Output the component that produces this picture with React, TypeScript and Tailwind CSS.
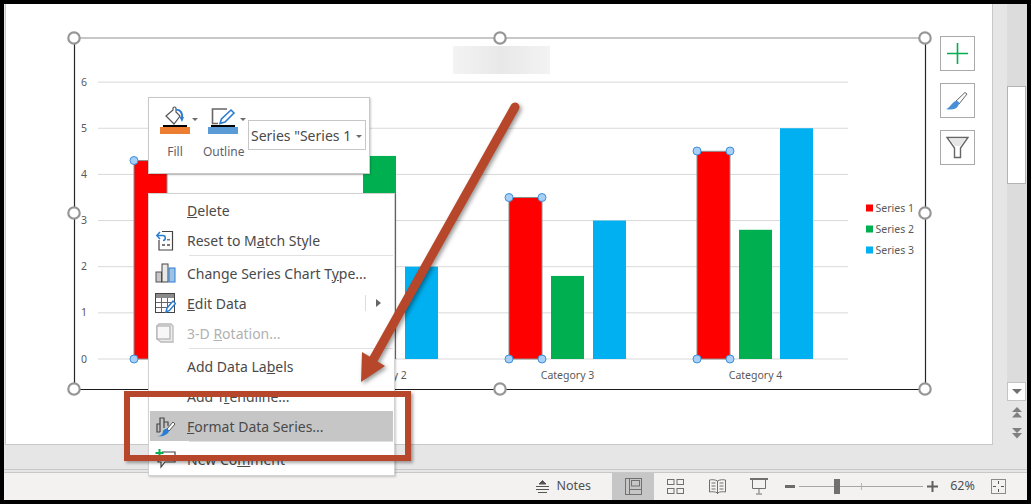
import type { ReactNode } from "react";

const rows = [6, 5, 4, 3, 2, 1, 0];
const yFor = (v: number) => 359 - v * 46.15;

const bars = [
  { x: 134, v: 4.3, fill: "#ff0000", selected: true },
  { x: 176, v: 2.4, fill: "#00b050" },
  { x: 217, v: 2, fill: "#00b0f0" },
  { x: 322, v: 2.5, fill: "#ff0000", selected: true },
  { x: 363, v: 4.4, fill: "#00b050" },
  { x: 405, v: 2, fill: "#00b0f0" },
  { x: 509, v: 3.5, fill: "#ff0000", selected: true },
  { x: 551, v: 1.8, fill: "#00b050" },
  { x: 593, v: 3, fill: "#00b0f0" },
  { x: 697, v: 4.5, fill: "#ff0000", selected: true },
  { x: 739, v: 2.8, fill: "#00b050" },
  { x: 780, v: 5, fill: "#00b0f0" },
];

const frameHandles = [
  [74, 38],
  [500, 38],
  [925, 38],
  [74, 213],
  [925, 213],
  [74, 389],
  [500, 389],
  [925, 389],
];

function DataHandle({ x, y }: { x: number; y: number }) {
  return <circle cx={x} cy={y} r="4" fill="#a8cff5" stroke="#3d8fdc" strokeWidth="1" />;
}

function Chart() {
  return (
    <svg className="absolute left-0 top-0" width="1031" height="504" viewBox="0 0 1031 504" fontFamily="'Noto Sans', sans-serif">
      {rows.map((v) => (
        <g key={v}>
          <line x1="98" x2="848" y1={yFor(v)} y2={yFor(v)} stroke="#d9d9d9" strokeWidth="1" />
          <text x="84" y={yFor(v) + 3.5} textAnchor="middle" fontSize="10.5" fill="#595959">
            {v}
          </text>
        </g>
      ))}
      {bars.map((b) => (
        <rect
          key={b.x}
          x={b.x}
          y={yFor(b.v)}
          width="33"
          height={359 - yFor(b.v)}
          fill={b.fill}
          stroke={b.selected ? "#8c8c8c" : "none"}
          strokeWidth="1"
        />
      ))}
      {[134, 509, 542, 697, 730].map((x) => (
        <DataHandle key={x} x={x} y={x === 134 ? 160.5 : x < 600 ? 197.5 : 151} />
      ))}
      {[134, 509, 542, 697, 730].map((x) => (
        <DataHandle key={x} x={x} y={359} />
      ))}
      <text x="380" y="379" textAnchor="middle" fontSize="10.5" fill="#595959">Category 2</text>
      <text x="567.5" y="379" textAnchor="middle" fontSize="10.5" fill="#595959">Category 3</text>
      <text x="755.5" y="379" textAnchor="middle" fontSize="10.5" fill="#595959">Category 4</text>
      {[
        { y: 208, c: "#ff0000", t: "Series 1" },
        { y: 229, c: "#00b050", t: "Series 2" },
        { y: 250, c: "#00b0f0", t: "Series 3" },
      ].map((l) => (
        <g key={l.t}>
          <rect x="866" y={l.y - 3.5} width="7" height="7" fill={l.c} />
          <text x="875.5" y={l.y + 3.5} fontSize="10.5" fill="#595959">{l.t}</text>
        </g>
      ))}
      <line x1="74" x2="925" y1="38" y2="38" stroke="#8f8f8f" strokeWidth="1" />
      <line x1="74" x2="925" y1="389.5" y2="389.5" stroke="#1a1a1a" strokeWidth="1.2" />
      <line x1="74.5" x2="74.5" y1="38" y2="389" stroke="#262626" strokeWidth="1.2" />
      <line x1="925.5" x2="925.5" y1="38" y2="389" stroke="#262626" strokeWidth="1.2" />
      {frameHandles.map(([x, y]) => (
        <circle key={`${x}-${y}`} cx={x} cy={y} r="5.7" fill="#fff" stroke="#969696" strokeWidth="2.2" />
      ))}
    </svg>
  );
}

function FillIcon() {
  return (
    <svg width="30" height="30" viewBox="0 0 30 30">
      <path d="M6 11 L13 5 L13 3 Q14.500 1 16 3 L16 7 L20 11 L14 19 Z" fill="#fff" stroke="#555" strokeWidth="1.200" />
      <path d="M16 5 C20 4 23 8 22 14" fill="none" stroke="#2b7cd3" strokeWidth="1.800" />
      <path d="M19.500 12 L22 17 L24 12 Z" fill="#2b7cd3" />
      <rect x="3" y="20" width="24" height="2" fill="#000" />
      <rect x="0" y="22" width="30" height="7" fill="#ed7d31" />
    </svg>
  );
}

function OutlineIcon() {
  return (
    <svg width="30" height="30" viewBox="0 0 30 30">
      <path d="M19 4 H4.500 V18.500 H10" fill="none" stroke="#666" strokeWidth="1.600" />
      <path d="M12 18.500 L13.500 14 L23 5 L26 8 L17 17 Z" fill="#fff" stroke="#2b7cd3" strokeWidth="1.600" />
      <rect x="3" y="20" width="24" height="2" fill="#000" />
      <rect x="0" y="22" width="30" height="7" fill="#5b9bd5" />
    </svg>
  );
}

function Caret() {
  return <span className="h-0 w-0 border-x-[3px] border-t-[3px] border-x-transparent border-t-[#6b6b6b]" />;
}

function MiniToolbar() {
  return (
    <div className="absolute left-[148px] top-[97px] flex h-[77px] w-[222px] border border-[#c8c8c8] bg-white pl-[11px] pt-[7px] font-['Noto_Sans',sans-serif] shadow-[1px_1px_2px_rgba(0,0,0,0.2)]">
      <div className="flex w-[48px] flex-col">
        <div className="relative h-[30px]">
          <FillIcon />
          <span className="absolute left-[32px] top-[13px] flex">
            <Caret />
          </span>
        </div>
        <span className="mt-[9px] w-[30px] text-center text-[12px] leading-4 text-[#5f5f6b]">Fill</span>
      </div>
      <div className="flex w-[40px] flex-col">
        <div className="relative h-[30px]">
          <OutlineIcon />
          <span className="absolute left-[32px] top-[13px] flex">
            <Caret />
          </span>
        </div>
        <span className="-ml-[5px] mt-[9px] text-[12px] leading-4 text-[#5f5f6b]">Outline</span>
      </div>
      <div className="mt-[15px] flex h-[30px] w-[118px] items-center justify-between border border-[#c6c6c6] pl-[2px] pr-[3px] text-[14px] whitespace-nowrap text-[#4a4a4a]">
        <span>Series "Series 1</span>
        <span className="mt-[2px] flex">
          <Caret />
        </span>
      </div>
    </div>
  );
}

function ResetIcon() {
  return (
    <svg width="18" height="21" viewBox="0 0 18 21">
      <path d="M6 1.500 H16.500 V20 H3 V10" fill="none" stroke="#444" strokeWidth="1.200" />
      <rect x="6" y="14" width="3" height="2" fill="#777" />
      <rect x="11" y="14" width="3" height="2" fill="#777" />
      <rect x="11" y="9" width="3" height="1.500" fill="#777" />
      <path d="M1 5.500 H7 C10 5.500 10 10.500 7 10.500" fill="none" stroke="#2b7cd3" strokeWidth="1.500" />
      <path d="M4 2 L0.800 5.500 L4 9" fill="none" stroke="#2b7cd3" strokeWidth="1.500" />
    </svg>
  );
}

function ChartTypeIcon() {
  return (
    <svg width="21" height="20" viewBox="0 0 21 20">
      <rect x="1" y="9" width="5.500" height="10" fill="#c8c8c8" stroke="#555" />
      <rect x="7" y="1" width="6" height="18" fill="#e8e8e8" stroke="#444" />
      <rect x="14" y="5" width="6" height="14" fill="#9cc3e6" stroke="#2b7cd3" />
    </svg>
  );
}

function EditDataIcon() {
  return (
    <svg width="21" height="20" viewBox="0 0 21 20">
      <rect x="0.500" y="0.500" width="19" height="19" fill="#fff" stroke="#444" />
      <rect x="1" y="1" width="18" height="4" fill="#8a8a8a" />
      <path d="M1 9.500 H19 M1 14.500 H13 M6.500 5 V19 M12.500 5 V17" stroke="#666" fill="none" />
      <path d="M11 19 L12 15 L18 8 L20.500 10.500 L14.500 17.500 Z" fill="#fff" stroke="#2b7cd3" strokeWidth="1.500" />
    </svg>
  );
}

function RotationIcon() {
  return (
    <svg width="18" height="20" viewBox="0 0 18 20">
      <path d="M3 1 H15 L17 3 V19 H5 L1 16 V3 Z" fill="#ececec" stroke="#b9b9b9" strokeWidth="1.300" />
      <rect x="1" y="3" width="13" height="13" fill="#f7f7f7" stroke="#b4b4b4" strokeWidth="1.300" />
    </svg>
  );
}

function FormatIcon() {
  return (
    <svg width="21" height="21" viewBox="0 0 21 21">
      <path d="M5 16 V8 H2 V16 H5 M5 8 V2 H9 V12 M9 6 H13 V10" fill="none" stroke="#444" strokeWidth="1.200" />
      <path d="M12 13 L18 6 L20 8 L14 15 Z" fill="#fff" stroke="#555" />
      <path d="M2 20 C6 20 8 18 8 15 C10 12 13 12 14 15 C13 19 7 21 2 20 Z" fill="#2b7cd3" />
    </svg>
  );
}

function CommentIcon() {
  return (
    <svg width="21" height="20" viewBox="0 0 21 20">
      <path d="M7 3 H20 V13 H10 L6 18 V13 H3 V10" fill="none" stroke="#444" strokeWidth="1.200" />
      <path d="M4.500 0 V8 M0.500 4 H8.500" stroke="#00b050" strokeWidth="2" />
    </svg>
  );
}

function MenuRow({ icon, children, disabled, active, arrow }: { icon?: ReactNode; children: ReactNode; disabled?: boolean; active?: boolean; arrow?: boolean }) {
  return (
    <div className={`relative ml-px mr-px flex h-[30px] items-center ${active ? "bg-[#c6c6c6]" : ""} ${disabled ? "text-[#b1b1b1]" : "text-[#4a4a4a]"}`}>
      <span className="mr-[7px] flex w-[30px] justify-center">{icon}</span>
      <span className="whitespace-nowrap">{children}</span>
      {arrow && (
        <span className="ml-auto flex h-[16px] items-center border-l border-[#dcdcdc] pl-[10px] pr-[12px]">
          <span className="h-0 w-0 border-y-[4px] border-l-[5px] border-y-transparent border-l-[#666]" />
        </span>
      )}
    </div>
  );
}

function Separator() {
  return <div className="mb-[2px] ml-[40px] mr-px h-px bg-[#e1e1e1]" />;
}

function ContextMenu() {
  return (
    <div className="absolute left-[148px] top-[193px] h-[283px] w-[247px] border border-[#d2d2d2] bg-white pt-px font-['Noto_Sans',sans-serif] text-[14px] shadow-[1px_1px_2px_rgba(0,0,0,0.2)]">
      <MenuRow><u>D</u>elete</MenuRow>
      <MenuRow icon={<ResetIcon />}>Reset to M<u>a</u>tch Style</MenuRow>
      <Separator />
      <MenuRow icon={<ChartTypeIcon />}>Change Series Chart T<u>y</u>pe...</MenuRow>
      <MenuRow icon={<EditDataIcon />} arrow><u>E</u>dit Data</MenuRow>
      <MenuRow icon={<RotationIcon />} disabled>3-D <u>R</u>otation...</MenuRow>
      <Separator />
      <MenuRow>Add Data La<u>b</u>els</MenuRow>
      <MenuRow>Add T<u>r</u>endline...</MenuRow>
      <MenuRow icon={<FormatIcon />} active><u>F</u>ormat Data Series...</MenuRow>
      <Separator />
      <MenuRow icon={<CommentIcon />}>New Co<u>m</u>ment</MenuRow>
    </div>
  );
}

function Annotations() {
  return (
    <>
      <svg className="absolute left-0 top-0 drop-shadow-[2px_2px_2px_rgba(0,0,0,0.4)]" width="1031" height="504" viewBox="0 0 1031 504">
        <line x1="515" y1="107" x2="373" y2="360" stroke="#b7472a" strokeWidth="9" strokeLinecap="round" />
        <path d="M361 382 L385 366 L362 352 Z" fill="#b7472a" />
      </svg>
      <div className="absolute left-[124px] top-[391px] h-[70px] w-[287px] border-[6px] border-[#b7472a] shadow-[2px_2px_3px_rgba(0,0,0,0.35)]" />
    </>
  );
}

function SideButton({ children }: { children: ReactNode }) {
  return <div className="flex h-[35px] w-[35px] items-center justify-center border border-[#aaaaaa] bg-white">{children}</div>;
}

function SideButtons() {
  return (
    <div className="absolute left-[940px] top-[36px] flex flex-col gap-3">
      <SideButton>
        <svg width="21" height="21" viewBox="0 0 21 21">
          <path d="M10.500 0 V21 M0 10.500 H21" stroke="#00b050" strokeWidth="1.600" />
        </svg>
      </SideButton>
      <SideButton>
        <svg width="23" height="20" viewBox="0 0 23 20">
          <path d="M10 10 L19 1.500 L21 3 L13 13" fill="#fff" stroke="#666" />
          <path d="M0 18 C4 17 6 11 10 10 C13 10 14 12 12 15 C10 19 4 19 0 18 Z" fill="#4a90d9" />
        </svg>
      </SideButton>
      <SideButton>
        <svg width="23" height="23" viewBox="0 0 23 23">
          <path d="M1 1.500 H22 L14.500 12 V21.500 H8.500 V12 Z" fill="#fff" stroke="#666" strokeWidth="1.400" />
          <path d="M3 2.500 H20 L14 10 H9 Z" fill="#e6e6e6" />
        </svg>
      </SideButton>
    </div>
  );
}

function Scrollbar() {
  return (
    <div className="flex w-[34px] bg-[#e6e6e6]">
      <div className="w-[14px]" />
      <div className="flex w-[20px] flex-col">
        <div className="bg-[#dcdcdc] pb-[198px] pt-[82px]">
          <div className="h-[98px] w-[19px] border border-[#b3b3b3] bg-white" />
        </div>
        <div className="flex h-[19px] w-[19px] items-center justify-center border border-[#c4c4c4] bg-white">
          <span className="h-0 w-0 border-x-[5px] border-t-[5px] border-x-transparent border-t-[#707070]" />
        </div>
        <div className="flex w-[19px] flex-col items-center">
          <svg className="mt-[6px]" width="10" height="11" viewBox="0 0 10 11" fill="#808080">
            <path d="M5 0 L10 5 H0 Z M5 5 L10 10.500 H0 Z" />
          </svg>
          <svg className="mt-[10px]" width="10" height="11" viewBox="0 0 10 11" fill="#808080">
            <path d="M0 0 H10 L5 5 Z M0 5 H10 L5 10.500 Z" />
          </svg>
        </div>
      </div>
    </div>
  );
}

function ViewButton({ active, children }: { active?: boolean; children: ReactNode }) {
  return <div className={`flex h-full w-[42px] items-center justify-center ${active ? "bg-[#c6c6c6]" : ""}`}>{children}</div>;
}

function StatusBar() {
  return (
    <div className="flex h-[27px] items-center justify-end bg-[#f3f2f1] pr-[13px] font-['Noto_Sans',sans-serif] text-[12.5px] text-[#505050]">
      <div className="mr-[21px] flex items-center gap-[7px]">
        <svg width="13" height="14" viewBox="0 0 13 14" fill="none" stroke="#555">
          <path d="M6.500 0.500 L10 4 H3 Z" fill="#555" />
          <path d="M0 6.500 H13 M0 9.500 H13 M2 12.500 H11" />
        </svg>
        <span>Notes</span>
      </div>
      <ViewButton active>
        <svg width="17" height="17" viewBox="0 0 17 17" fill="none" stroke="#707070">
          <rect x="0.500" y="0.500" width="16" height="16" />
          <path d="M4.500 0.500 V16.500" />
          <rect x="6.500" y="2.500" width="8" height="5.500" />
          <path d="M4.500 11.500 H16.500" />
        </svg>
      </ViewButton>
      <ViewButton>
        <svg width="17" height="15" viewBox="0 0 17 15" fill="none" stroke="#707070">
          <rect x="0.500" y="0.500" width="6.500" height="5" />
          <rect x="10" y="0.500" width="6.500" height="5" />
          <rect x="0.500" y="9.500" width="6.500" height="5" />
          <rect x="10" y="9.500" width="6.500" height="5" />
        </svg>
      </ViewButton>
      <ViewButton>
        <svg width="17" height="16" viewBox="0 0 17 16" fill="none" stroke="#707070">
          <path d="M8.500 2 C6 0.500 3 0.500 0.500 1 V13 C3 12.500 6 12.500 8.500 14 C11 12.500 14 12.500 16.500 13 V1 C14 0.500 11 0.500 8.500 2 Z M8.500 2 V15" />
          <path d="M2.500 4 H6.500 M2.500 7 H6.500 M2.500 10 H6.500 M10.500 4 H14.500 M10.500 7 H14.500 M10.500 10 H14.500" />
        </svg>
      </ViewButton>
      <ViewButton>
        <svg width="18" height="17" viewBox="0 0 18 17" fill="none" stroke="#707070">
          <path d="M0 1 H18" strokeWidth="2" />
          <path d="M2.500 1 V10.500 H15.500 V1 M9 10.500 V15.500 M6 16 H12" />
        </svg>
      </ViewButton>
      <div className="flex w-[19px] justify-center">
        <span className="h-[3px] w-[10px] bg-[#6b6b6b]" />
      </div>
      <div className="relative h-px w-[124px] bg-[#a6a6a6]">
        <span className="absolute left-[62px] top-[-3px] h-[7px] w-px bg-[#b5b5b5]" />
        <span className="absolute left-[35px] top-[-7px] h-[15px] w-[6px] bg-[#707070]" />
      </div>
      <div className="flex w-[19px] justify-center">
        <svg width="11" height="11" viewBox="0 0 11 11">
          <path d="M5.500 0 V11 M0 5.500 H11" stroke="#5f5f5f" strokeWidth="2" />
        </svg>
      </div>
      <span className="w-[41px] text-center">62%</span>
      <div className="flex w-[31px] justify-center">
        <svg width="15" height="15" viewBox="0 0 15 15" fill="none" stroke="#8a8a8a">
          <rect x="0.500" y="0.500" width="14" height="14" />
          <path d="M7.500 2 V5 M7.500 10 V13 M2 7.500 H5 M10 7.500 H13" stroke="#555" />
        </svg>
      </div>
    </div>
  );
}

export default function App() {
  return (
    <div className="relative h-[504px] w-[1031px] overflow-hidden bg-black p-1">
      <div className="flex h-full flex-col bg-[#e6e6e6]">
        <div className="flex h-[465px]">
          <div className="flex-1 pl-px">
            <div className="h-[441px] border-x border-b border-[#c8c8c8] bg-white" />
          </div>
          <Scrollbar />
        </div>
        <div className="h-px bg-[#c8c8c8]" />
        <div className="h-[2px]" />
        <div className="h-px bg-[#c8c8c8]" />
        <StatusBar />
      </div>
      <div className="absolute left-[453px] top-[46px] h-[28px] w-[97px] bg-gradient-to-r from-[#f3f3f3] via-[#e8e8e8] to-[#f3f3f3]" />
      <Chart />
      <SideButtons />
      <MiniToolbar />
      <ContextMenu />
      <Annotations />
    </div>
  );
}
